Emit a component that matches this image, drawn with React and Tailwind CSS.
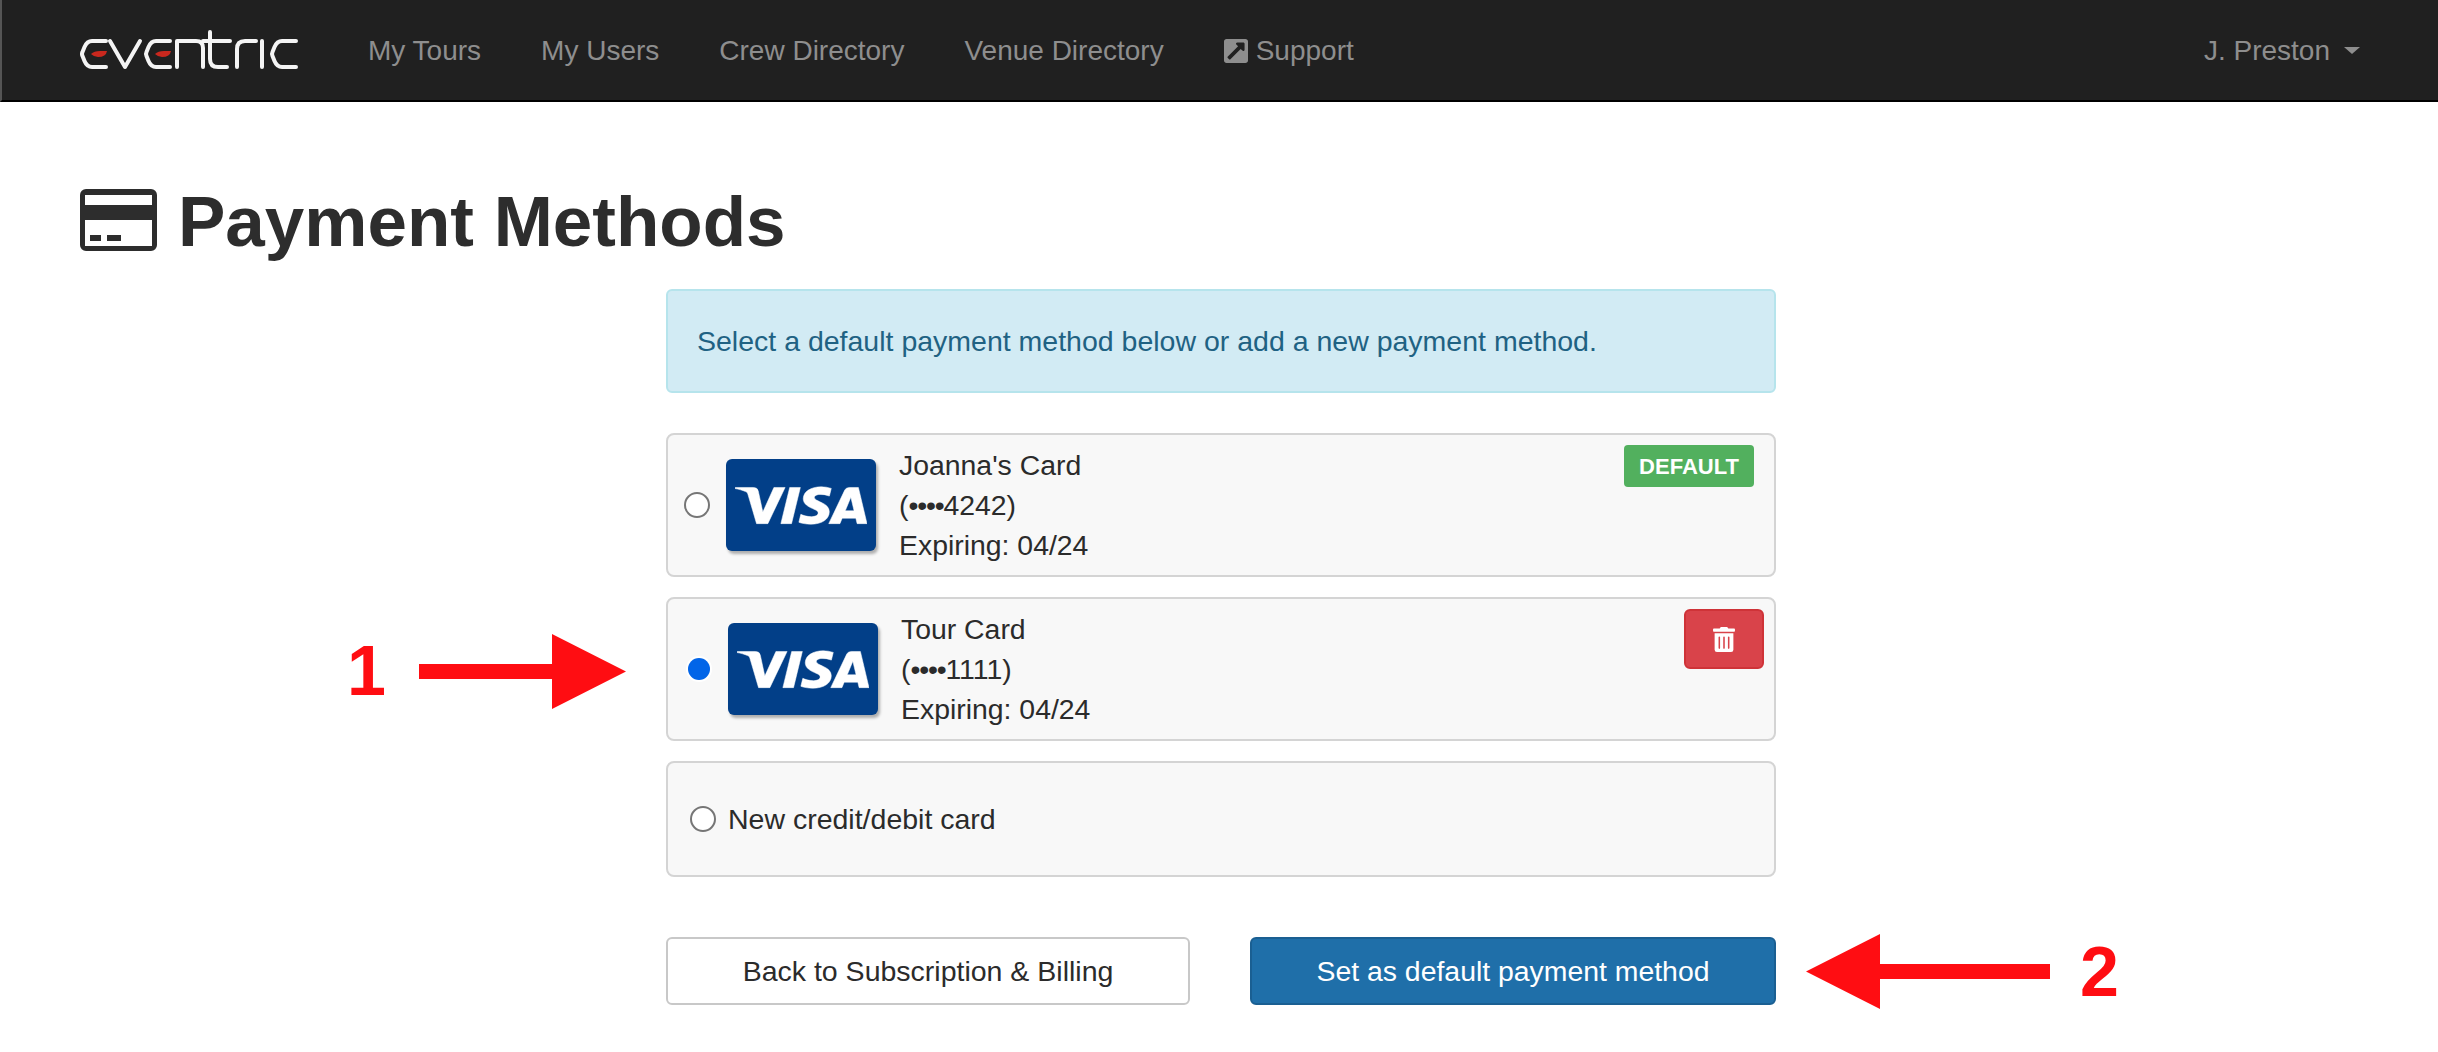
import React from "react";
import { FaExternalLinkSquareAlt, FaTrashAlt } from "react-icons/fa";
import { SiVisa } from "react-icons/si";

const FONT = "font-['Liberation_Sans',Arial,sans-serif]";

function LogoE({ x }) {
  return (
    <g transform={`translate(${x},0)`}>
      <path d="M26 11 L12 11 Q7 11 4.500 17 L2.500 22 Q1.500 24 2.500 26 L4.500 31 Q7 37 12 37 L26 37" />
      <path d="M11 24 Q14 21 20 21 L27 21 Q26 27 18 27 Q14 27 11 24z" fill="#c9281e" stroke="none" />
    </g>
  );
}

function Logo() {
  return (
    <svg width="218" height="40" viewBox="0 0 218 40" fill="none" stroke="#f4f4f4" strokeWidth="4" strokeLinecap="round" strokeLinejoin="round" aria-label="eventric">
      <LogoE x={0} />
      <path d="M30 11 L45 37 L60 11" />
      <LogoE x={64} />
      <path d="M97 37 L97 11 L116 11 Q123 11 123 18 L123 37" />
      <path d="M130 2 L130 29 Q130 37 138 37 L147 37 M123 11 L150 11" />
      <path d="M157 37 L157 19 Q157 11 165 11 L176 11" />
      <path d="M182 11 L182 37" />
      <path d="M216 11 L202 11 Q197 11 194.500 17 L192.500 22 Q191.500 24 192.500 26 L194.500 31 Q197 37 202 37 L216 37" />
    </svg>
  );
}

function TitleCardIcon() {
  return (
    <svg width="77" height="62" viewBox="0 0 77 62" className="shrink-0" aria-hidden="true">
      <path
        fillRule="evenodd"
        fill="#2d2d2d"
        d="M6 0h65a6 6 0 0 1 6 6v50a6 6 0 0 1-6 6H6a6 6 0 0 1-6-6V6a6 6 0 0 1 6-6zM5 6v10h67V6zM5 31v26h67V31zM10 46h11v6H10zM27 46h14v6H27z"
      />
    </svg>
  );
}

function VisaCard() {
  return (
    <div className="flex h-[92px] w-[150px] shrink-0 items-center justify-center rounded-[6px] bg-[#023f88] shadow-[2px_3px_3px_rgba(0,0,0,0.3)]">
      <SiVisa color="#ffffff" stroke="#ffffff" strokeWidth="0.1" className="h-[41px] w-[132px]" viewBox="0 7.75 24 8.5" preserveAspectRatio="none" />
    </div>
  );
}

function Radio({ checked, className = "" }) {
  if (checked) {
    return <span className={`h-[22px] w-[22px] shrink-0 rounded-full bg-[#0265e8] ring-2 ring-white ${className}`} />;
  }
  return <span className={`h-[26px] w-[26px] shrink-0 rounded-full border-2 border-[#767676] bg-white ${className}`} />;
}

function CardLines({ name, num }) {
  return (
    <div className="text-[28.4px] leading-[40px] text-[#2b2b2b]">
      <div>{name}</div>
      <div>(<span className="tracking-[-1.2px]">{"••••"}</span>{num})</div>
      <div>Expiring: 04/24</div>
    </div>
  );
}

function NavLink({ children, className = "" }) {
  return <a className={`flex items-center pt-[1px] text-[28px] text-[#8e8e8e] ${className}`}>{children}</a>;
}

export default function App() {
  return (
    <div className={`relative min-h-[1052px] bg-white ${FONT}`}>
      <nav className="flex h-[102px] items-center border-b-2 border-l-2 border-b-black border-l-[#555555] bg-[#202020] pl-[78px] pr-[78px]">
        <Logo />
        <div className="ml-[70px] flex items-center gap-[60px]">
          <NavLink>My Tours</NavLink>
          <NavLink>My Users</NavLink>
          <NavLink>Crew Directory</NavLink>
          <NavLink>Venue Directory</NavLink>
          <NavLink>
            <FaExternalLinkSquareAlt className="mr-[8px] h-[28px] w-[24px]" />
            Support
          </NavLink>
        </div>
        <div className="ml-auto flex items-center">
          <NavLink>J. Preston</NavLink>
          <span className="ml-[14px] h-0 w-0 border-x-[8px] border-t-[7px] border-x-transparent border-t-[#8e8e8e]" />
        </div>
      </nav>

      <main className="px-[80px]">
        <div className="mt-[87px] flex h-[62px] items-center gap-[21px]">
          <TitleCardIcon />
          <h1 className="pt-[2px] text-[71px] font-bold leading-none text-[#2d2d2d]">Payment Methods</h1>
        </div>

        <div className="ml-[586px] mt-[38px] w-[1110px]">
          <div className="flex h-[104px] items-center rounded-[6px] border-2 border-[#b6e4ec] bg-[#d2ebf4] pl-[29px] text-[28.5px] text-[#1f6283]">
            Select a default payment method below or add a new payment method.
          </div>

          <div className="relative mt-[40px] flex h-[144px] items-center rounded-[8px] border-2 border-[#d4d4d4] bg-[#f8f8f8] pl-[16px]">
            <Radio className="mr-[16px]" />
            <VisaCard />
            <div className="ml-[23px]"><CardLines name="Joanna's Card" num="4242" /></div>
            <span className="absolute right-[20px] top-[10px] flex h-[42px] w-[130px] items-center justify-center rounded-[4px] bg-[#52b05e] text-[22px] font-bold text-white">DEFAULT</span>
          </div>

          <div className="relative mt-[20px] flex h-[144px] items-center rounded-[8px] border-2 border-[#d4d4d4] bg-[#f8f8f8] pl-[20px]">
            <Radio checked />
            <div className="ml-[18px]"><VisaCard /></div>
            <div className="ml-[23px]"><CardLines name="Tour Card" num="1111" /></div>
            <button className="absolute right-[10px] top-[10px] flex h-[60px] w-[80px] items-center justify-center rounded-[6px] border-2 border-[#cf3338] bg-[#d9434a] text-white">
              <FaTrashAlt className="h-[25px] w-[22px]" />
            </button>
          </div>

          <div className="mt-[20px] flex h-[116px] items-center rounded-[8px] border-2 border-[#d4d4d4] bg-[#f8f8f8] pl-[22px] text-[28.5px] text-[#2b2b2b]">
            <Radio className="mr-[12px]" />
            New credit/debit card
          </div>

          <div className="mt-[60px] flex justify-between">
            <button className="h-[68px] w-[524px] rounded-[6px] border-2 border-[#c8c8c8] bg-white text-center text-[28.5px] text-[#2b2b2b]">
              Back to Subscription &amp; Billing
            </button>
            <button className="h-[68px] w-[526px] rounded-[6px] border-2 border-[#1a5f92] bg-[#1f6fa9] text-center text-[28.4px] text-white">
              Set as default payment method
            </button>
          </div>
        </div>
      </main>

      <span className="absolute left-[347px] top-[632px] text-[70px] font-bold leading-[78px] text-[#ff0d12]">1</span>
      <svg className="absolute left-[419px] top-[634px]" width="207" height="75" viewBox="0 0 207 75" aria-hidden="true">
        <path fill="#ff0d12" d="M0 30h133V0l74 37.5L133 75V45H0z" />
      </svg>

      <svg className="absolute left-[1806px] top-[934px]" width="244" height="75" viewBox="0 0 244 75" aria-hidden="true">
        <path fill="#ff0d12" d="M244 30H74V0L0 37.5 74 75V45h170z" />
      </svg>
      <span className="absolute left-[2080px] top-[933px] text-[70px] font-bold leading-[78px] text-[#ff0d12]">2</span>
    </div>
  );
}
